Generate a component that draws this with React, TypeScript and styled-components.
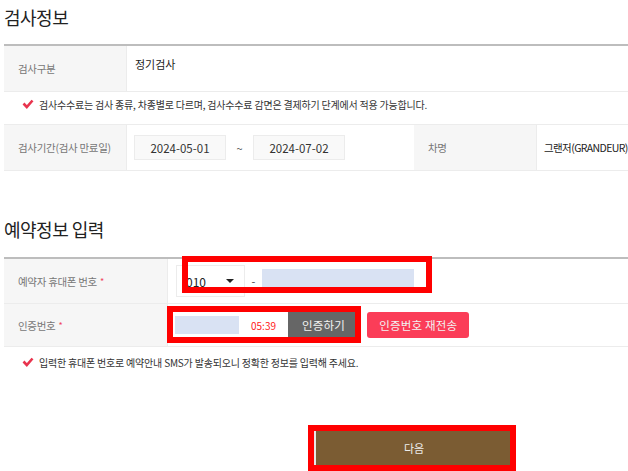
import styled, { createGlobalStyle } from "styled-components";

const GlobalStyle = createGlobalStyle`
  body {
    margin: 0;
    background: #fff;
    font-family: "Noto Sans CJK KR", "Noto Sans", sans-serif;
    color: #222;
  }
`;

const Page = styled.div`
  width: 628px;
  height: 471px;
  overflow: hidden;
  padding-left: 4px;
  box-sizing: border-box;
`;

const Title = styled.h2<{ top: number }>`
  margin: ${(p) => p.top}px 0 0;
  height: 28px;
  font-size: 18px;
  font-weight: 400;
  line-height: 28px;
  color: #222;
  letter-spacing: -0.5px;
`;

const Table = styled.div<{ top: number; thin?: boolean }>`
  margin-top: ${(p) => p.top}px;
  border-top: ${(p) => (p.thin ? "1px solid #ececec" : "2px solid #bdbdbd")};
  width: 640px;
`;

const Row = styled.div<{ cols: string; h: number }>`
  display: grid;
  grid-template-columns: ${(p) => p.cols};
  height: ${(p) => p.h}px;
  border-bottom: 1px solid #ececec;
  box-sizing: content-box;
`;

const Label = styled.div`
  background: #f6f6f6;
  border-right: 1px solid #ececec;
  display: flex;
  align-items: center;
  padding-left: 14px;
  font-size: 10.5px;
  color: #777;
  letter-spacing: -0.3px;
`;

const Star = styled.span`
  color: #f0475f;
  margin-left: 3px;
  font-size: 9px;
`;

const Value = styled.div<{ alignTop?: boolean; pad?: number }>`
  display: flex;
  align-items: ${(p) => (p.alignTop ? "flex-start" : "center")};
  padding: ${(p) => (p.alignTop ? "10px 0 0 8px" : `0 0 0 ${p.pad ?? 7}px`)};
  font-size: 11px;
  color: #222;
  position: relative;
  white-space: nowrap;
`;

const CarName = styled.span`
  font-size: 10.5px;
  letter-spacing: -0.6px;
`;

const Notice = styled.p<{ top: number }>`
  margin: ${(p) => p.top}px 0 0;
  padding-left: 18px;
  display: flex;
  align-items: center;
  gap: 5px;
  font-size: 10px;
  color: #333;
  height: 22px;
  letter-spacing: -0.2px;
`;

const DateBox = styled.div`
  width: 92px;
  height: 25px;
  box-sizing: border-box;
  background: #f9f9f9;
  border: 1px solid #ececec;
  display: flex;
  align-items: center;
  justify-content: center;
  font-size: 11.5px;
  color: #333;
`;

const Tilde = styled.span`
  width: 27px;
  text-align: center;
  font-size: 11px;
  color: #555;
`;

const Select = styled.div`
  width: 69px;
  height: 32px;
  box-sizing: border-box;
  border: 1px solid #ececec;
  display: flex;
  align-items: center;
  justify-content: space-between;
  padding: 0 10px 0 9px;
  margin-left: 1px;
  font-size: 12px;
  color: #222;
`;

const Caret = styled.span`
  width: 0;
  height: 0;
  border-left: 4px solid transparent;
  border-right: 4px solid transparent;
  border-top: 4px solid #222;
`;

const Dash = styled.span`
  width: 17px;
  text-align: center;
  font-size: 11px;
  color: #444;
`;

const BlueInput = styled.div<{ w: number; h: number }>`
  width: ${(p) => p.w}px;
  height: ${(p) => p.h}px;
  background: #d9e2f3;
`;

const Timer = styled.span`
  width: 49px;
  text-align: center;
  font-size: 10px;
  color: #ff2020;
`;

const Button = styled.div<{ bg: string; radius?: number; gap?: number; pad?: number }>`
  height: 26px;
  padding: 0 ${(p) => p.pad ?? 14}px;
  margin-left: ${(p) => p.gap ?? 0}px;
  display: flex;
  align-items: center;
  background: ${(p) => p.bg};
  border-radius: ${(p) => p.radius ?? 0}px;
  color: #f2f2f2;
  font-size: 11.5px;
  letter-spacing: 0.2px;
`;

const Mark = styled.div<{ left: number; top: number; w: number; h: number }>`
  position: absolute;
  left: ${(p) => p.left}px;
  top: ${(p) => p.top}px;
  width: ${(p) => p.w}px;
  height: ${(p) => p.h}px;
  border: 6px solid #ff0000;
  box-sizing: border-box;
  pointer-events: none;
`;

const Footer = styled.div`
  display: flex;
  padding-left: 310px;
  margin-top: 58px;
`;

const NextWrap = styled.div`
  position: relative;
`;

const NextButton = styled.div`
  width: 196px;
  height: 34px;
  background: #7b5c33;
  display: flex;
  align-items: center;
  justify-content: center;
  color: #eee;
  font-size: 11px;
  border-left: 2px solid #e8e8e8;
  box-shadow: 0 3px 0 #d8d8d8;
`;

function Check() {
  return (
    <svg width="12" height="10" viewBox="0 0 12 10">
      <path d="M1.5 4.5 L4.8 8 L10.5 1.5" fill="none" stroke="#e8344e" strokeWidth="2.6" />
    </svg>
  );
}

export default function App() {
  return (
    <Page>
      <GlobalStyle />
      <Title top={3}>검사정보</Title>
      <Table top={13}>
        <Row cols="123px 1fr" h={45}>
          <Label>검사구분</Label>
          <Value alignTop>정기검사</Value>
        </Row>
      </Table>
      <Notice top={1}>
        <Check />
        검사수수료는 검사 종류, 차종별로 다르며, 검사수수료 감면은 결제하기 단계에서 적용 가능합니다.
      </Notice>
      <Table top={9} thin>
        <Row cols="123px 287px 123px 1fr" h={45}>
          <Label>검사기간(검사 만료일)</Label>
          <Value>
            <DateBox>2024-05-01</DateBox>
            <Tilde>~</Tilde>
            <DateBox>2024-07-02</DateBox>
          </Value>
          <Label>차명</Label>
          <Value pad={7}>
            <CarName>그랜저(GRANDEUR)</CarName>
          </Value>
        </Row>
      </Table>
      <Title top={44}>예약정보 입력</Title>
      <Table top={14}>
        <Row cols="164px 1fr" h={44}>
          <Label>
            예약자 휴대폰 번호<Star>*</Star>
          </Label>
          <Value>
            <Select>
              010
              <Caret />
            </Select>
            <Dash>-</Dash>
            <BlueInput w={152} h={24} />
            <Mark left={14} top={-3} w={250} h={37} />
          </Value>
        </Row>
        <Row cols="164px 1fr" h={42}>
          <Label>
            인증번호<Star>*</Star>
          </Label>
          <Value>
            <BlueInput w={64} h={18} />
            <Timer>05:39</Timer>
            <Button bg="#666">인증하기</Button>
            <Button bg="#fb3d58" radius={3} gap={8} pad={12}>
              인증번호 재전송
            </Button>
            <Mark left={-1} top={2} w={194} h={37} />
          </Value>
        </Row>
      </Table>
      <Notice top={4}>
        <Check />
        입력한 휴대폰 번호로 예약안내 SMS가 발송되오니 정확한 정보를 입력해 주세요.
      </Notice>
      <Footer>
        <NextWrap>
          <NextButton>다음</NextButton>
          <Mark left={-6} top={-6} w={208} h={46} />
        </NextWrap>
      </Footer>
    </Page>
  );
}
